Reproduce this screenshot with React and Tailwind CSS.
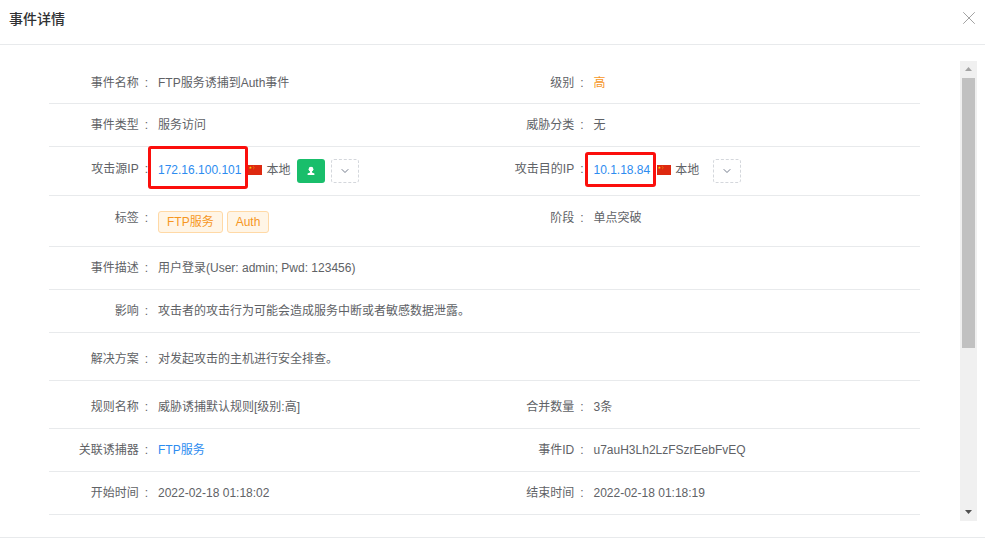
import { X, ChevronDown } from 'lucide-react';

const Flag = () => (
  <svg width="14" height="10" viewBox="0 0 14 10" className="shrink-0">
    <rect width="14" height="10" fill="#de2910" />
    <path d="M2.4 1.2l.4 1h1l-.8.7.3 1-.9-.6-.9.6.3-1-.8-.7h1z" fill="#ffde00" />
    <circle cx="5.2" cy="1.2" r=".4" fill="#ffde00" />
    <circle cx="6" cy="2.4" r=".4" fill="#ffde00" />
    <circle cx="5.8" cy="3.8" r=".4" fill="#ffde00" />
  </svg>
);

const DashedButton = () => (
  <button className="mt-[2px] flex h-6 w-7 items-center justify-center rounded-[3px] border border-dashed border-[#d4d7dc] text-[#515a6e]">
    <ChevronDown size={12} strokeWidth={1.6} />
  </button>
);

const UserButton = () => (
  <button className="mt-[2px] flex h-6 w-7 items-center justify-center rounded-[3px] bg-[#19be6b]">
    <svg width="10" height="10" viewBox="0 0 10 10" fill="#fff">
      <circle cx="5" cy="3.2" r="2.4" />
      <path d="M4 5h2v1.6l2.4 1V9H1.6V7.6L4 6.6z" />
    </svg>
  </button>
);

const Tag = ({ children }) => (
  <span className="flex h-[22px] items-center rounded-[3px] border border-[#ffd9a6] bg-[#fff5e6] px-2 text-[#f6971f]">
    {children}
  </span>
);

const Cell = ({ label, children, labelOffset = '' }) => (
  <div className="flex w-[436px] items-center">
    <div className={`w-[99px] shrink-0 text-right text-[#606266] ${labelOffset}`}>
      {label}<span className="ml-[6px]">:</span>
    </div>
    <div className="ml-[10px] flex items-center">{children}</div>
  </div>
);

const Row = ({ height, children }) => (
  <div className={`flex items-center border-b border-[#e8eaec] ${height}`}>{children}</div>
);

const Local = () => (
  <>
    <Flag />
    <span className="ml-1">本地</span>
  </>
);

export default function App() {
  return (
    <div
      className="flex h-[556px] w-[985px] flex-col overflow-hidden bg-white text-xs text-[#606266]"
      style={{ fontFamily: '"Liberation Sans", "Noto Sans CJK SC", sans-serif' }}
    >
      {/* Header */}
      <div className="flex h-[45px] shrink-0 items-center justify-between border-b border-[#e8eaec] pl-[9px] pr-[5px]">
        <h2 className="-mt-[6px] text-sm font-medium text-[#303133]">事件详情</h2>
        <X size={22} strokeWidth={1} className="-mt-[8px] text-[#999]" />
      </div>

      {/* Body */}
      <div className="relative flex h-[493px] shrink-0 border-b border-[#e8eaec]">
        <div className="ml-[49px] w-[871px] pt-[15px]">
          <Row height="h-[44px] pt-[2px]">
            <Cell label="事件名称">FTP服务诱捕到Auth事件</Cell>
            <Cell label="级别"><span className="text-[#f6971f]">高</span></Cell>
          </Row>
          <Row height="h-[43px]">
            <Cell label="事件类型">服务访问</Cell>
            <Cell label="威胁分类">无</Cell>
          </Row>
          <Row height="h-[49px] pb-[2px]">
            <Cell label="攻击源IP" labelOffset="-mt-[2px]">
              <span className="text-[#2d8cf0]">172.16.100.101</span>
              <span className="ml-[7px] flex items-center"><Local /></span>
              <span className="ml-[7px] flex gap-[6px]"><UserButton /><DashedButton /></span>
            </Cell>
            <Cell label="攻击目的IP" labelOffset="-mt-[2px]">
              <span className="text-[#2d8cf0]">10.1.18.84</span>
              <span className="ml-[7px] flex items-center"><Local /></span>
              <span className="ml-[14px]"><DashedButton /></span>
            </Cell>
          </Row>
          <Row height="h-[51px]">
            <Cell label="标签" labelOffset="-mt-[6px]">
              <span className="mt-[1px] flex gap-1"><Tag>FTP服务</Tag><Tag>Auth</Tag></span>
            </Cell>
            <Cell label="阶段" labelOffset="-mt-[6px]"><span className="-mt-[6px]">单点突破</span></Cell>
          </Row>
          <Row height="h-[43px]">
            <Cell label="事件描述">用户登录(User: admin; Pwd: 123456)</Cell>
          </Row>
          <Row height="h-[43px]">
            <Cell label="影响"><span className="whitespace-nowrap">攻击者的攻击行为可能会造成服务中断或者敏感数据泄露。</span></Cell>
          </Row>
          <Row height="h-[48px] pt-[4px]">
            <Cell label="解决方案">对发起攻击的主机进行安全排查。</Cell>
          </Row>
          <Row height="h-[48px] pt-[4px]">
            <Cell label="规则名称">威胁诱捕默认规则[级别:高]</Cell>
            <Cell label="合并数量">3条</Cell>
          </Row>
          <Row height="h-[43px]">
            <Cell label="关联诱捕器"><span className="text-[#2d8cf0]">FTP服务</span></Cell>
            <Cell label="事件ID">u7auH3Lh2LzFSzrEebFvEQ</Cell>
          </Row>
          <Row height="h-[43px]">
            <Cell label="开始时间">2022-02-18 01:18:02</Cell>
            <Cell label="结束时间">2022-02-18 01:18:19</Cell>
          </Row>
        </div>

        {/* Scrollbar */}
        <div className="ml-[40px] mt-[16px] flex h-[460px] w-[17px] flex-col items-center bg-[#f0f0f0]">
          <svg width="9" height="17" viewBox="0 0 9 17" fill="#a3a3a3" className="shrink-0">
            <path d="M4.5 6 L8 10 H1z" />
          </svg>
          <div className="h-[270px] w-[13px] bg-[#c1c1c1]" />
          <svg width="9" height="10" viewBox="0 0 9 10" fill="#505050" className="mt-auto mb-[3px] shrink-0">
            <path d="M1 2 H8 L4.5 6z" />
          </svg>
        </div>

        {/* Screenshot annotations */}
        <div className="absolute left-[148px] top-[101px] h-[43px] w-[100px] rounded-[3px] border-[3px] border-[#fb0f0c]" />
        <div className="absolute left-[585px] top-[107px] h-[35px] w-[71px] rounded-[3px] border-[3px] border-[#fb0f0c]" />
      </div>
    </div>
  );
}
